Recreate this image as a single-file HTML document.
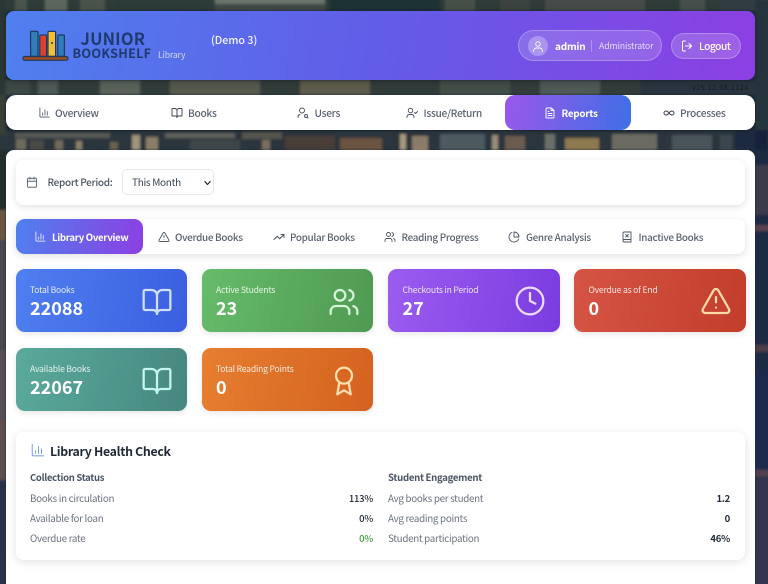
<!DOCTYPE html>
<html><head><meta charset="utf-8"><style>
*{box-sizing:border-box}
html,body{margin:0;padding:0;width:768px;height:584px;overflow:hidden;background:#1c2a3a}
body{font-family:"Noto Sans CJK JP","Liberation Sans",sans-serif}
#w{position:relative;width:768px;height:584px;overflow:hidden;filter:blur(.35px)}
.a{position:absolute}
.t{position:absolute;white-space:nowrap;line-height:14px}
svg.i{position:absolute;fill:none;stroke:currentColor;stroke-width:2;stroke-linecap:round;stroke-linejoin:round}
.nav{font-size:10.2px;letter-spacing:-.3px;color:#5a6270;font-weight:500;top:106px}
.sub{font-size:9.9px;letter-spacing:-.3px;color:#5a6270;font-weight:500;top:230px}
.card{position:absolute;border-radius:9px;width:171.5px;height:63.5px;box-shadow:0 2px 6px rgba(0,0,0,.1)}
.lbl{position:absolute;left:14.5px;top:14.5px;font-size:8.6px;letter-spacing:-.2px;line-height:14px;color:rgba(255,255,255,.85);white-space:nowrap}
.num{position:absolute;left:14.5px;top:26px;font-size:18px;line-height:26px;font-weight:700;color:#fff;white-space:nowrap}
.row{font-size:9.8px;letter-spacing:-.3px;color:#6b7280}
.v{font-size:9.5px;letter-spacing:-.25px;color:#1f2937;font-weight:500;text-align:right;width:60px}
</style></head><body><div id="w">
<svg class="a" style="left:0;top:0" width="768" height="584" viewBox="0 0 768 584">
<defs><filter id="b"><feGaussianBlur stdDeviation="1.2"/></filter></defs>
<rect width="768" height="584" fill="#1b2b3d"/>
<g filter="url(#b)">
<rect x="-5" y="-5" width="780" height="16" fill="#2e3a38"/>
<rect x="15" y="-5" width="12" height="16" fill="#4a524c"/><rect x="45" y="-5" width="22" height="16" fill="#5c665e"/><rect x="80" y="-5" width="25" height="16" fill="#4a524c"/>
<rect x="115" y="-5" width="95" height="16" fill="#293a38"/><rect x="215" y="-5" width="110" height="16" fill="#3f4a46"/><rect x="215" y="-5" width="110" height="9" fill="#6a726a"/>
<rect x="330" y="-5" width="110" height="16" fill="#1d3234"/><rect x="445" y="-5" width="30" height="16" fill="#46504a"/><rect x="500" y="-5" width="30" height="16" fill="#3a4240"/><rect x="545" y="-5" width="100" height="16" fill="#464c48"/><rect x="680" y="-5" width="25" height="16" fill="#46504e"/><rect x="720" y="-5" width="48" height="16" fill="#323e42"/>
<rect x="-5" y="80" width="780" height="15" fill="#323c3a"/>
<rect x="5" y="80" width="25" height="15" fill="#3e4845"/><rect x="38" y="80" width="20" height="15" fill="#4e5a55"/><rect x="100" y="80" width="40" height="15" fill="#5a625a"/><rect x="170" y="80" width="90" height="15" fill="#565a4e"/><rect x="300" y="80" width="70" height="15" fill="#5e5c4c"/><rect x="440" y="80" width="70" height="15" fill="#454f4a"/><rect x="540" y="80" width="60" height="15" fill="#505a56"/><rect x="640" y="80" width="128" height="15" fill="#2b3640"/>
<rect x="-5" y="130" width="780" height="20" fill="#2a363c"/>
<rect x="15" y="133" width="95" height="5" fill="#555a54"/>
<rect x="16" y="139" width="10" height="11" fill="#6e6a5a"/><rect x="30" y="140" width="14" height="10" fill="#4a4a44"/><rect x="55" y="140" width="8" height="10" fill="#706858"/><rect x="76" y="141" width="6" height="9" fill="#8a8068"/><rect x="110" y="142" width="8" height="8" fill="#6a6050"/><rect x="132" y="135" width="8" height="15" fill="#a0947a"/><rect x="146" y="137" width="12" height="13" fill="#8a7e68"/><rect x="165" y="133" width="70" height="5" fill="#5e625c"/><rect x="190" y="140" width="50" height="10" fill="#3c464a"/><rect x="242" y="132" width="40" height="7" fill="#54544e"/><rect x="262" y="140" width="8" height="10" fill="#7a6e5c"/><rect x="285" y="136" width="50" height="14" fill="#4a3e38"/><rect x="340" y="138" width="42" height="12" fill="#6a5240"/><rect x="400" y="134" width="6" height="16" fill="#a8987e"/><rect x="412" y="136" width="16" height="16" fill="#8a7c68"/><rect x="440" y="134" width="45" height="16" fill="#4e5a60"/><rect x="492" y="135" width="6" height="15" fill="#9a8c78"/><rect x="505" y="136" width="20" height="14" fill="#6c5c50"/><rect x="545" y="134" width="10" height="16" fill="#6a7068"/><rect x="565" y="138" width="34" height="12" fill="#8e7850"/><rect x="612" y="134" width="45" height="16" fill="#6a6a60"/><rect x="672" y="135" width="40" height="15" fill="#48525a"/><rect x="720" y="135" width="12" height="15" fill="#3a4650"/><rect x="735" y="130" width="25" height="20" fill="#1d2c40"/><rect x="755" y="130" width="13" height="20" fill="#17243a"/>
<rect x="-5" y="0" width="11" height="95" fill="#2a3834"/>
<rect x="-5" y="95" width="11" height="40" fill="#383f36"/>
<rect x="-5" y="150" width="11" height="60" fill="#222f2a"/>
<rect x="-5" y="210" width="11" height="30" fill="#6a5642"/>
<rect x="-5" y="240" width="11" height="110" fill="#4a4650"/>
<rect x="-5" y="350" width="11" height="70" fill="#545054"/>
<rect x="-5" y="420" width="11" height="60" fill="#5e5050"/>
<rect x="-5" y="480" width="11" height="110" fill="#2a3348"/>
<rect x="755" y="0" width="18" height="130" fill="#26353c"/>
<rect x="755" y="150" width="18" height="220" fill="#1c2a42"/>
<rect x="755" y="165" width="18" height="50" fill="#3a3a4c"/>
<rect x="755" y="225" width="18" height="6" fill="#5a4250"/>
<rect x="755" y="345" width="18" height="7" fill="#4e3c46"/>
<rect x="755" y="370" width="18" height="100" fill="#1a2a4e"/>
<rect x="755" y="470" width="18" height="7" fill="#54404e"/>
<rect x="755" y="478" width="18" height="110" fill="#35364f"/>
</g>
</svg>
<div class="t" style="left:692px;top:81px;font-size:7px;color:#141c24;letter-spacing:.6px">v25.12.08.1124</div>

<!-- header -->
<div class="a" style="left:6px;top:11px;width:749px;height:69px;border-radius:8px;background:linear-gradient(100deg,#4f80ee 0%,#625ce8 50%,#8c3fe2 100%);box-shadow:0 2px 8px rgba(0,0,0,.25)"></div>
<svg class="a" style="left:20px;top:28px" width="52" height="36" viewBox="20 28 52 36">
<g stroke="#1f3a5f" stroke-width="1.2">
<rect x="30.6" y="31.4" width="7.4" height="25" rx="1" fill="#2f7db9"/>
<rect x="39.8" y="35" width="6.8" height="21.4" rx="1" fill="#d9432a"/>
<rect x="48" y="31.4" width="7.6" height="25" rx="1" fill="#f3be36"/>
<rect x="57.8" y="35" width="6.6" height="21.4" rx="1" fill="#2f7db9"/>
<rect x="23" y="56.5" width="45" height="3.8" rx="1.8" fill="#9a4c22"/>
</g>
<circle cx="52" cy="43" r="1" fill="#1f3a5f"/>
</svg>
<div class="t" style="left:80.5px;top:30px;font-size:16.5px;line-height:16px;font-weight:700;color:#1e3a70;letter-spacing:.2px">JUNIOR</div>
<div class="t" style="left:72.5px;top:46px;font-size:12.6px;line-height:14px;font-weight:700;color:#1e3a70;letter-spacing:.3px">BOOKSHELF</div>
<div class="t" style="left:158px;top:48px;font-size:8.6px;letter-spacing:-.15px;color:#d6dcfa">Library</div>
<div class="t" style="left:211px;top:33.5px;font-size:10.7px;color:#f6f6ff;font-weight:500">(Demo 3)</div>

<div class="a" style="left:517.5px;top:30px;width:144px;height:31px;border-radius:16px;background:rgba(255,255,255,.16);border:1px solid rgba(255,255,255,.25)"></div>
<div class="a" style="left:528px;top:36px;width:20px;height:20px;border-radius:50%;background:rgba(255,255,255,.28)"></div>
<svg class="i" style="left:532px;top:39.5px;color:#fff;stroke-width:1.8" width="12" height="13" viewBox="0 0 24 24"><circle cx="12" cy="7" r="4.5"/><path d="M3.5 22v-2a5 5 0 0 1 5-5h7a5 5 0 0 1 5 5v2"/></svg>
<div class="t" style="left:555px;top:39px;font-size:10px;letter-spacing:-.2px;font-weight:700;color:#fff">admin</div>
<div class="a" style="left:591px;top:40px;width:1px;height:12px;background:rgba(255,255,255,.3)"></div>
<div class="t" style="left:599px;top:39px;font-size:8.8px;letter-spacing:-.15px;color:#e2daff">Administrator</div>
<div class="a" style="left:671px;top:32.5px;width:70px;height:26px;border-radius:13px;background:rgba(255,255,255,.17);border:1px solid rgba(255,255,255,.25)"></div>
<svg class="i" style="left:681px;top:39.5px;color:#fff" width="12" height="12" viewBox="0 0 24 24"><path d="M9 22H5a2 2 0 0 1-2-2V4a2 2 0 0 1 2-2h4"/><path d="M16 17l5-5-5-5"/><path d="M21 12H9"/></svg>
<div class="t" style="left:699px;top:38.5px;font-size:10.2px;letter-spacing:-.45px;font-weight:500;color:#fff">Logout</div>

<!-- nav -->
<div class="a" style="left:6px;top:95px;width:749px;height:35px;border-radius:10px;background:#fff;box-shadow:0 1px 3px rgba(0,0,0,.3)"></div>
<div class="a" style="left:505px;top:95px;width:125.5px;height:35px;border-radius:10px;background:linear-gradient(100deg,#9a58ea,#3f6fe6)"></div>
<svg class="i" style="left:39px;top:107px;color:#4b5260;stroke-width:1.8" width="11" height="11" viewBox="0 0 24 24"><path d="M2 2v18a2 2 0 0 0 2 2h18"/><path d="M8 18v-5"/><path d="M13 18V6"/><path d="M18 18v-8"/></svg>
<div class="t nav" style="left:55px">Overview</div>
<svg class="i" style="left:170.5px;top:106.5px;color:#3f4652;stroke-width:1.9" width="12" height="12" viewBox="0 0 24 24"><path d="M12 7v14"/><path d="M3 18a1 1 0 0 1-1-1V4a1 1 0 0 1 1-1h5a4 4 0 0 1 4 4 4 4 0 0 1 4-4h5a1 1 0 0 1 1 1v13a1 1 0 0 1-1 1h-6a3 3 0 0 0-3 3 3 3 0 0 0-3-3z"/></svg>
<div class="t nav" style="left:188px">Books</div>
<svg class="i" style="left:297px;top:106.5px;color:#4b5260;stroke-width:1.9" width="12" height="12" viewBox="0 0 24 24"><circle cx="10" cy="7" r="5"/><path d="M2 21v-2a5 5 0 0 1 4-4"/><circle cx="18" cy="18" r="3"/><path d="M22 22l-1.9-1.9"/></svg>
<div class="t nav" style="left:314.5px">Users</div>
<svg class="i" style="left:406px;top:106.5px;color:#4b5260;stroke-width:1.9" width="12" height="12" viewBox="0 0 24 24"><circle cx="9" cy="7" r="4.5"/><path d="M2 21v-2a5 5 0 0 1 5-4h4a5 5 0 0 1 5 4v2"/><path d="M17 11l2 2 4-4"/></svg>
<div class="t nav" style="left:423.5px">Issue/Return</div>
<svg class="i" style="left:544px;top:106.5px;color:#fff;stroke-width:1.9" width="12" height="12" viewBox="0 0 24 24"><path d="M15 2H6a2 2 0 0 0-2 2v16a2 2 0 0 0 2 2h12a2 2 0 0 0 2-2V7z"/><path d="M14 2v5h6"/><path d="M16 13H8"/><path d="M16 17H8"/><path d="M10 9H8"/></svg>
<div class="t nav" style="left:561.5px;color:#fff;font-weight:700;font-size:9.9px">Reports</div>
<svg class="i" style="left:662.5px;top:106.5px;color:#3f4652;stroke-width:2.1" width="12" height="12" viewBox="0 0 24 24"><path d="M12 12c-2-2.7-4-4-6-4a4 4 0 0 0 0 8c2 0 4-1.3 6-4m0 0c2 2.700 4 4 6 4a4 4 0 0 0 0-8c-2 0-4 1.300-6 4z"/></svg>
<div class="t nav" style="left:680px">Processes</div>

<!-- main -->
<div class="a" style="left:6px;top:150px;width:749px;height:434px;border-radius:8px 8px 0 0;background:#fff"></div>
<div class="a" style="left:16px;top:160px;width:729px;height:44.5px;border-radius:8px;background:#fff;box-shadow:0 2px 8px rgba(0,0,0,.12)"></div>
<svg class="i" style="left:25.5px;top:176px;color:#5a6270;stroke-width:1.8" width="12" height="12.5" viewBox="0 0 24 24"><rect x="3" y="4" width="18" height="18" rx="2"/><path d="M16 2v4"/><path d="M8 2v4"/><path d="M3 10h18"/></svg>
<div class="t" style="left:47.5px;top:175px;font-size:10px;letter-spacing:-.3px;font-weight:500;color:#4b5563">Report Period:</div>
<div class="a" style="left:121.5px;top:169px;width:92.5px;height:26px;border-radius:5px;background:#fff;border:1px solid #e4e7ec"></div>
<div class="t" style="left:132px;top:175px;font-size:10px;letter-spacing:-.3px;color:#374151">This Month</div>
<svg class="i" style="left:204px;top:179.5px;color:#222;stroke-width:4" width="7" height="6" viewBox="0 0 24 20"><path d="M3 5l9 10 9-10"/></svg>

<div class="a" style="left:16px;top:219px;width:729px;height:34.5px;border-radius:8px;background:#fff;box-shadow:0 2px 8px rgba(0,0,0,.12)"></div>
<div class="a" style="left:15.5px;top:219px;width:127.5px;height:34.5px;border-radius:9px;background:linear-gradient(100deg,#4f80ee,#8c3fe2)"></div>
<svg class="i" style="left:35px;top:231px;color:#fff;stroke-width:1.7" width="11" height="11" viewBox="0 0 24 24"><path d="M2 2v18a2 2 0 0 0 2 2h18"/><path d="M8 18v-5"/><path d="M13 18V6"/><path d="M18 18v-8"/></svg>
<div class="t sub" style="left:52px;color:#fff;font-weight:700;font-size:9.6px">Library Overview</div>
<svg class="i" style="left:158px;top:230.5px;color:#4b5563;stroke-width:1.8" width="12" height="12" viewBox="0 0 24 24"><path d="M21.7 18l-8-14a2 2 0 0 0-3.5 0l-8 14A2 2 0 0 0 4 21h16a2 2 0 0 0 1.7-3z"/><path d="M12 9v4"/><path d="M12 17h.01"/></svg>
<div class="t sub" style="left:175px">Overdue Books</div>
<svg class="i" style="left:273px;top:230.5px;color:#4b5563;stroke-width:2" width="12" height="12" viewBox="0 0 24 24"><path d="M22 7l-8.5 8.5-5-5L2 17"/><path d="M16 7h6v6"/></svg>
<div class="t sub" style="left:290px">Popular Books</div>
<svg class="i" style="left:384px;top:230.5px;color:#4b5563;stroke-width:1.8" width="12" height="12" viewBox="0 0 24 24"><path d="M16 21v-2a4 4 0 0 0-4-4H6a4 4 0 0 0-4 4v2"/><circle cx="9" cy="7" r="4"/><path d="M22 21v-2a4 4 0 0 0-3-3.900"/><path d="M16 3.100a4 4 0 0 1 0 7.800"/></svg>
<div class="t sub" style="left:401.5px">Reading Progress</div>
<svg class="i" style="left:508px;top:230.5px;color:#4b5563;stroke-width:1.8" width="12" height="12" viewBox="0 0 24 24"><path d="M21.200 15.900A10 10 0 1 1 8 2.800"/><path d="M22 12A10 10 0 0 0 12 2v10z"/></svg>
<div class="t sub" style="left:526px">Genre Analysis</div>
<svg class="i" style="left:621px;top:230.5px;color:#4b5563;stroke-width:1.8" width="12" height="12" viewBox="0 0 24 24"><path d="M4 19.500v-15A2.500 2.500 0 0 1 6.500 2H20v20H6.500a2.500 2.500 0 0 1 0-5H20"/><path d="M9.500 7l5 5"/><path d="M14.500 7l-5 5"/></svg>
<div class="t sub" style="left:638.5px">Inactive Books</div>

<!-- stat cards -->
<div class="card" style="left:15.5px;top:268.5px;background:linear-gradient(100deg,#4f7ff0,#3a5fe0)"><div class="lbl">Total Books</div><div class="num">22088</div>
<svg class="i" style="left:125.5px;top:17px;color:#cfe0ff;stroke-width:1.7" width="32" height="32" viewBox="0 0 24 24"><path d="M12 7v14"/><path d="M3 18a1 1 0 0 1-1-1V4a1 1 0 0 1 1-1h5a4 4 0 0 1 4 4 4 4 0 0 1 4-4h5a1 1 0 0 1 1 1v13a1 1 0 0 1-1 1h-6a3 3 0 0 0-3 3 3 3 0 0 0-3-3z"/></svg></div>
<div class="card" style="left:201.5px;top:268.5px;background:linear-gradient(100deg,#66bb6a,#4f9a52)"><div class="lbl">Active Students</div><div class="num">23</div>
<svg class="i" style="left:126px;top:17px;color:#d8f5da;stroke-width:1.7" width="32" height="32" viewBox="0 0 24 24"><path d="M16 21v-2a4 4 0 0 0-4-4H6a4 4 0 0 0-4 4v2"/><circle cx="9" cy="7" r="4"/><path d="M22 21v-2a4 4 0 0 0-3-3.900"/><path d="M16 3.100a4 4 0 0 1 0 7.800"/></svg></div>
<div class="card" style="left:388px;top:268.5px;background:linear-gradient(100deg,#9b5cf0,#7a3ce0)"><div class="lbl">Checkouts in Period</div><div class="num">27</div>
<svg class="i" style="left:125.5px;top:16.5px;color:#ecdcff;stroke-width:1.7" width="32" height="32" viewBox="0 0 24 24"><circle cx="12" cy="12" r="10"/><path d="M12 6v6l4 2"/></svg></div>
<div class="card" style="left:574px;top:268.5px;background:linear-gradient(100deg,#d65445,#c23e2a)"><div class="lbl">Overdue as of End</div><div class="num">0</div>
<svg class="i" style="left:125.5px;top:16px;color:#fad9a8;stroke-width:1.7" width="32" height="32" viewBox="0 0 24 24"><path d="M21.700 18l-8-14a2 2 0 0 0-3.500 0l-8 14A2 2 0 0 0 4 21h16a2 2 0 0 0 1.700-3z"/><path d="M12 9v4"/><path d="M12 17h.01"/></svg></div>
<div class="card" style="left:15.5px;top:347.5px;background:linear-gradient(100deg,#5aaa9c,#46877f)"><div class="lbl">Available Books</div><div class="num">22067</div>
<svg class="i" style="left:125.5px;top:17px;color:#c4f5ee;stroke-width:1.7" width="32" height="32" viewBox="0 0 24 24"><path d="M12 7v14"/><path d="M3 18a1 1 0 0 1-1-1V4a1 1 0 0 1 1-1h5a4 4 0 0 1 4 4 4 4 0 0 1 4-4h5a1 1 0 0 1 1 1v13a1 1 0 0 1-1 1h-6a3 3 0 0 0-3 3 3 3 0 0 0-3-3z"/></svg></div>
<div class="card" style="left:201.5px;top:347.5px;background:linear-gradient(100deg,#e67e30,#d4621f)"><div class="lbl">Total Reading Points</div><div class="num">0</div>
<svg class="i" style="left:126px;top:17px;color:#fde0b0;stroke-width:1.7" width="32" height="32" viewBox="0 0 24 24"><circle cx="12" cy="8" r="6"/><path d="M15.500 13L17 22l-5-3-5 3 1.500-9"/></svg></div>

<!-- health -->
<div class="a" style="left:16px;top:432px;width:729px;height:127.5px;border-radius:8px;background:#fff;box-shadow:0 2px 10px rgba(0,0,0,.12)"></div>
<svg class="i" style="left:30.5px;top:443px;color:#4f7ae0;stroke-width:1.3" width="14" height="14" viewBox="0 0 24 24"><path d="M2 2v18a2 2 0 0 0 2 2h18"/><path d="M8 18v-5"/><path d="M13 18V6"/><path d="M18 18v-8"/></svg>
<div class="t" style="left:50px;top:443.5px;font-size:12.3px;letter-spacing:-.3px;font-weight:700;color:#1f2937">Library Health Check</div>
<div class="t" style="left:30px;top:469.5px;font-size:9.5px;letter-spacing:-.3px;font-weight:700;color:#4b5563">Collection Status</div>
<div class="t" style="left:388px;top:469.5px;font-size:9.6px;letter-spacing:-.3px;font-weight:700;color:#4b5563">Student Engagement</div>
<div class="t row" style="left:30px;top:491px">Books in circulation</div><div class="t v" style="left:313px;top:491px">113%</div>
<div class="t row" style="left:30px;top:511px">Available for loan</div><div class="t v" style="left:313px;top:511px">0%</div>
<div class="t row" style="left:30px;top:530.5px">Overdue rate</div><div class="t v" style="left:313px;top:530.5px;color:#43a047">0%</div>
<div class="t row" style="left:388px;top:491px">Avg books per student</div><div class="t v" style="left:670px;top:491px;font-weight:700">1.2</div>
<div class="t row" style="left:388px;top:511px">Avg reading points</div><div class="t v" style="left:670px;top:511px;font-weight:700">0</div>
<div class="t row" style="left:388px;top:530.5px">Student participation</div><div class="t v" style="left:670px;top:530.5px;font-weight:700">46%</div>
</div></body></html>
